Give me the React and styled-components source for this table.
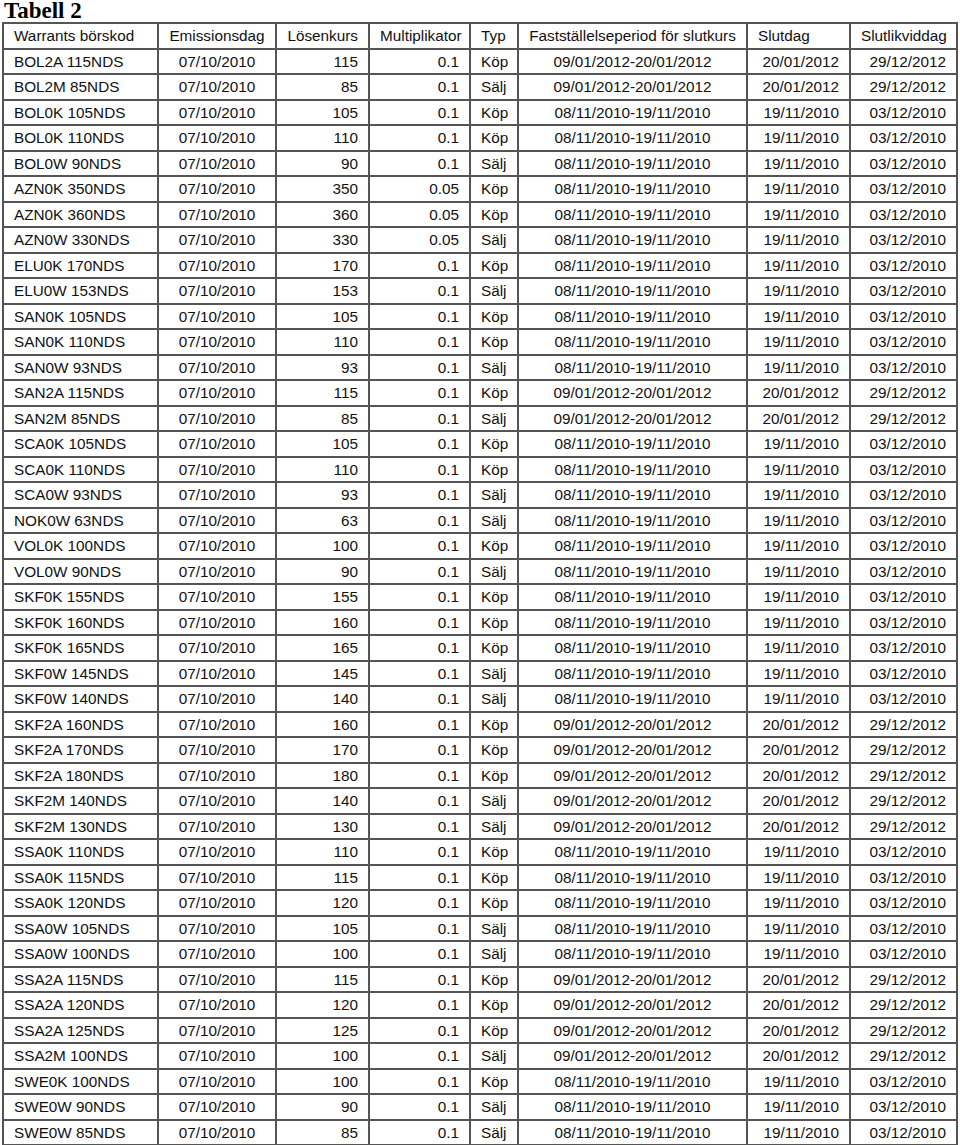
import React from "react";
import styled, { createGlobalStyle } from "styled-components";

const GlobalStyle = createGlobalStyle`
  html, body {
    margin: 0;
    padding: 0;
    background: #fff;
  }
`;

const P2010 = { period: "08/11/2010-19/11/2010", end: "19/11/2010", settle: "03/12/2010" };
const P2012 = { period: "09/01/2012-20/01/2012", end: "20/01/2012", settle: "29/12/2012" };

// kod, lösenkurs, multiplikator, typ, period
const rows = [
  ["BOL2A 115NDS", "115", "0.1", "Köp", P2012],
  ["BOL2M 85NDS", "85", "0.1", "Sälj", P2012],
  ["BOL0K 105NDS", "105", "0.1", "Köp", P2010],
  ["BOL0K 110NDS", "110", "0.1", "Köp", P2010],
  ["BOL0W 90NDS", "90", "0.1", "Sälj", P2010],
  ["AZN0K 350NDS", "350", "0.05", "Köp", P2010],
  ["AZN0K 360NDS", "360", "0.05", "Köp", P2010],
  ["AZN0W 330NDS", "330", "0.05", "Sälj", P2010],
  ["ELU0K 170NDS", "170", "0.1", "Köp", P2010],
  ["ELU0W 153NDS", "153", "0.1", "Sälj", P2010],
  ["SAN0K 105NDS", "105", "0.1", "Köp", P2010],
  ["SAN0K 110NDS", "110", "0.1", "Köp", P2010],
  ["SAN0W 93NDS", "93", "0.1", "Sälj", P2010],
  ["SAN2A 115NDS", "115", "0.1", "Köp", P2012],
  ["SAN2M 85NDS", "85", "0.1", "Sälj", P2012],
  ["SCA0K 105NDS", "105", "0.1", "Köp", P2010],
  ["SCA0K 110NDS", "110", "0.1", "Köp", P2010],
  ["SCA0W 93NDS", "93", "0.1", "Sälj", P2010],
  ["NOK0W 63NDS", "63", "0.1", "Sälj", P2010],
  ["VOL0K 100NDS", "100", "0.1", "Köp", P2010],
  ["VOL0W 90NDS", "90", "0.1", "Sälj", P2010],
  ["SKF0K 155NDS", "155", "0.1", "Köp", P2010],
  ["SKF0K 160NDS", "160", "0.1", "Köp", P2010],
  ["SKF0K 165NDS", "165", "0.1", "Köp", P2010],
  ["SKF0W 145NDS", "145", "0.1", "Sälj", P2010],
  ["SKF0W 140NDS", "140", "0.1", "Sälj", P2010],
  ["SKF2A 160NDS", "160", "0.1", "Köp", P2012],
  ["SKF2A 170NDS", "170", "0.1", "Köp", P2012],
  ["SKF2A 180NDS", "180", "0.1", "Köp", P2012],
  ["SKF2M 140NDS", "140", "0.1", "Sälj", P2012],
  ["SKF2M 130NDS", "130", "0.1", "Sälj", P2012],
  ["SSA0K 110NDS", "110", "0.1", "Köp", P2010],
  ["SSA0K 115NDS", "115", "0.1", "Köp", P2010],
  ["SSA0K 120NDS", "120", "0.1", "Köp", P2010],
  ["SSA0W 105NDS", "105", "0.1", "Sälj", P2010],
  ["SSA0W 100NDS", "100", "0.1", "Sälj", P2010],
  ["SSA2A 115NDS", "115", "0.1", "Köp", P2012],
  ["SSA2A 120NDS", "120", "0.1", "Köp", P2012],
  ["SSA2A 125NDS", "125", "0.1", "Köp", P2012],
  ["SSA2M 100NDS", "100", "0.1", "Sälj", P2012],
  ["SWE0K 100NDS", "100", "0.1", "Köp", P2010],
  ["SWE0W 90NDS", "90", "0.1", "Sälj", P2010],
  ["SWE0W 85NDS", "85", "0.1", "Sälj", P2010],
];

// bredd, rubrikjustering, datajustering
const columns = [
  { title: "Warrants börskod", width: 155, head: "left", data: "left" },
  { title: "Emissionsdag", width: 118, head: "center", data: "center" },
  { title: "Lösenkurs", width: 93, head: "right", data: "right" },
  { title: "Multiplikator", width: 101, head: "right", data: "right" },
  { title: "Typ", width: 48, head: "left", data: "left" },
  { title: "Fastställelseperiod för slutkurs", width: 229, head: "center", data: "center" },
  { title: "Slutdag", width: 103, head: "left", data: "right" },
  { title: "Slutlikviddag", width: 107, head: "center", data: "right" },
];

const App = () => {
  return (
    <Page>
      <GlobalStyle />
      <Title>Tabell 2</Title>
      <Table>
        <colgroup>
          {columns.map((c) => (
            <col key={c.title} style={{ width: c.width }} />
          ))}
        </colgroup>
        <thead>
          <Row>
            {columns.map((c) => (
              <HeadCell key={c.title} $align={c.head}>{c.title}</HeadCell>
            ))}
          </Row>
        </thead>
        <tbody>
          {rows.map(([code, strike, mult, type, p], idx) => {
            const values = [code, "07/10/2010", strike, mult, type, p.period, p.end, p.settle];
            return (
              <Row key={idx}>
                {values.map((v, i) => (
                  <Cell key={i} $align={columns[i].data}>{v}</Cell>
                ))}
              </Row>
            );
          })}
        </tbody>
      </Table>
    </Page>
  );
};

export default App;

const Page = styled.div`
  padding: 0 2px 2px 2px;
  width: 956px;
`;

const Title = styled.h1`
  margin: 0 0 0 2px;
  height: 22px;
  font-family: "Liberation Serif", "Times New Roman", serif;
  font-weight: bold;
  font-size: 23px;
  line-height: 22px;
  color: #000;
`;

const Table = styled.table`
  width: 956px;
  table-layout: fixed;
  border-collapse: collapse;
  border: 2px solid #555;
  font-family: "Liberation Sans", Arial, sans-serif;
  font-size: 15.3px;
  color: #111;
`;

const Row = styled.tr`
  height: 25.5px;
`;

const HeadCell = styled.th`
  font-weight: normal;
  text-align: ${(p) => p.$align};
  padding: 0 10px;
  border: 2px solid #555;
  white-space: nowrap;
  line-height: 17px;
`;

const Cell = styled.td`
  text-align: ${(p) => p.$align};
  padding: 0 10px;
  border: 2px solid #555;
  white-space: nowrap;
  line-height: 17px;
`;
